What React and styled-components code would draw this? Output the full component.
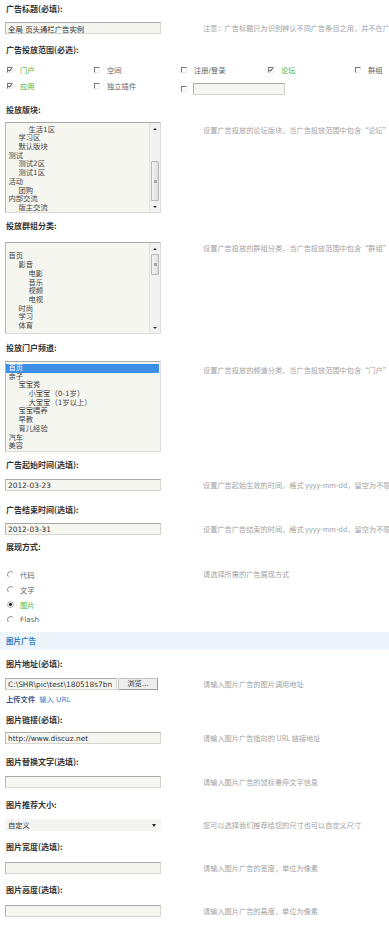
import React from "react";
import styled, { createGlobalStyle } from "styled-components";

const GlobalStyle = createGlobalStyle`
  html, body { margin: 0; padding: 0; background: #fff; }
  body {
    overflow: hidden;
    font-family: "DejaVu Sans", "Noto Sans CJK SC", sans-serif;
    color: #333;
  }
  #root { width: 389px; overflow: hidden; }
`;

const CJK = `"DejaVu Sans", "Noto Sans CJK SC", sans-serif`;

const Page = styled.div`
  width: 560px;
  padding-top: 2px;
  display: flex;
  flex-direction: column;
`;

const Label = styled.div`
  height: 14px;
  line-height: 14px;
  margin-top: ${(p) => p.$mt || 0}px;
  padding-left: 6px;
  font-size: 8px;
  font-weight: bold;
  color: #333;
  font-family: "Noto Sans CJK SC", sans-serif;
  white-space: nowrap;
`;

const Row = styled.div`
  display: grid;
  grid-template-columns: 198px 1fr;
  align-items: ${(p) => (p.$top ? "start" : "center")};
  margin-top: ${(p) => p.$mt || 0}px;
  padding-left: 5px;
`;

const Tip = styled.div`
  font-size: 7.2px;
  line-height: 9px;
  color: #a3a3a3;
  white-space: nowrap;
  font-family: "Noto Sans CJK SC", sans-serif;
  padding-top: ${(p) => p.$pt || 0}px;
`;

const TextInput = styled.input`
  box-sizing: border-box;
  width: ${(p) => p.$w || 156}px;
  height: 12px;
  margin: 0;
  padding: 0 0 0 2px;
  border: 1px solid #d6d6cf;
  border-top-color: #a9a9a9;
  border-left-color: #b5b5b5;
  background: #f6f6f1;
  font-family: ${CJK};
  font-size: 7.4px;
  line-height: 10px;
  color: #333;
  outline: none;
`;

const ScopeGrid = styled.div`
  display: grid;
  grid-template-columns: repeat(5, 87px);
  grid-auto-rows: 16px;
  align-items: center;
  padding-left: 7px;
  margin-top: 5px;
`;

const CheckItem = styled.label`
  display: flex;
  align-items: center;
  gap: ${(p) => (p.$gap != null ? p.$gap : 7)}px;
  font-family: ${CJK};
  font-size: 7.3px;
  color: ${(p) => (p.$on ? "#3cb83c" : "#666")};
  white-space: nowrap;
  margin-top: ${(p) => p.$dy || 0}px;
`;

const Box = styled.span`
  box-sizing: border-box;
  width: 6px;
  height: 6px;
  flex: none;
  display: inline-flex;
  border-top: 1px solid #777;
  border-left: 1px solid #777;
  border-right: 1px solid #ececec;
  border-bottom: 1px solid #ececec;
  background: #fff;
`;

const Check = ({ on }) => (
  <Box>
    {on && (
      <svg width="4" height="4" viewBox="0 0 4 4">
        <polyline points="0.3,1.8 1.4,3.2 3.7,0.4" fill="none" stroke="#222" strokeWidth="1" />
      </svg>
    )}
  </Box>
);

const ListBox = styled.div`
  box-sizing: border-box;
  width: 156px;
  height: ${(p) => p.$h}px;
  display: flex;
  border: 1px solid #dcdcd6;
  border-top-color: #a8a8a8;
  border-left-color: #b4b4b4;
  background: #f6f6f1;
  overflow: hidden;
`;

const Options = styled.div`
  flex: 1;
  padding-top: ${(p) => p.$pt || 0}px;
  padding-right: 1px;
  overflow: hidden;
`;

const Option = styled.div`
  height: 8.7px;
  line-height: 8.7px;
  font-family: ${CJK};
  font-size: 7.3px;
  white-space: nowrap;
  padding-left: ${(p) => 2.5 + p.$level * 10}px;
  color: ${(p) => (p.$sel ? "#fff" : "#444")};
  background: ${(p) => (p.$sel ? "#3d8ee6" : "transparent")};
`;

const Scrollbar = styled.div`
  width: 10px;
  flex: none;
  display: flex;
  flex-direction: column;
  background: #f1f1f1;
  border-left: 1px solid #e2e2e2;
`;

const ArrowBtn = styled.div`
  height: 11px;
  flex: none;
  display: flex;
  align-items: center;
  justify-content: center;
  &::before {
    content: "";
    border-left: 2px solid transparent;
    border-right: 2px solid transparent;
    ${(p) => (p.$down ? "border-top: 2px solid #333;" : "border-bottom: 2px solid #333;")}
  }
`;

const Track = styled.div`
  flex: 1;
  display: flex;
  flex-direction: column;
`;

const Thumb = styled.div`
  box-sizing: border-box;
  margin: 0 1px;
  border: 1px solid #b9b9b9;
  border-radius: 1px;
  background: linear-gradient(90deg, #f4f4f4, #dedede);
  display: flex;
  align-items: center;
  justify-content: center;
  &::after {
    content: "";
    width: 3px;
    height: 3px;
    background: #a8a8a8;
  }
`;

const RadioGroup = styled.div`
  display: flex;
  flex-direction: column;
  padding-left: 2px;
`;

const RadioItem = styled.label`
  height: 15px;
  display: flex;
  align-items: center;
  gap: 6px;
  font-family: ${CJK};
  font-size: 7.3px;
  color: ${(p) => (p.$on ? "#3cb83c" : "#666")};
`;

const Radio = ({ on }) => (
  <svg width="7" height="7" viewBox="0 0 7 7">
    {on ? (
      <>
        <circle cx="3.5" cy="3.5" r="3" fill="#e4e4e4" stroke="#999" strokeWidth="0.6" />
        <circle cx="3.5" cy="3.5" r="1.4" fill="#111" />
      </>
    ) : (
      <path d="M1.4 5.8 A3 3 0 0 1 5.8 1.4" fill="none" stroke="#777" strokeWidth="0.9" />
    )}
  </svg>
);

const SectionBar = styled.div`
  height: 18px;
  line-height: 18px;
  margin-top: 5px;
  padding-left: 6px;
  background: #eef5fa;
  color: #2b84c6;
  font-family: "Noto Sans CJK SC", sans-serif;
  font-weight: bold;
  font-size: 7.5px;
`;

const FileField = styled.div`
  display: flex;
  align-items: center;
  gap: 1px;
`;

const BrowseButton = styled.button`
  box-sizing: border-box;
  width: 40px;
  height: 12px;
  margin: 0;
  padding: 0;
  border: 1px solid #c4c4c4;
  border-bottom-color: #9c9c9c;
  border-right-color: #9c9c9c;
  background: #ededed;
  font-family: ${CJK};
  font-size: 7.3px;
  line-height: 10px;
  color: #333;
`;

const LinkRow = styled.div`
  height: 12px;
  line-height: 12px;
  margin-top: 4px;
  padding-left: 6px;
  display: flex;
  gap: 4px;
  font-family: ${CJK};
  font-size: 7.3px;
`;

const Link = styled.a`
  color: ${(p) => (p.$strong ? "#30578f" : "#3d7fc4")};
  font-weight: ${(p) => (p.$strong ? "bold" : "normal")};
  text-decoration: none;
`;

const Select = styled.div`
  box-sizing: border-box;
  width: 156px;
  height: 12px;
  display: flex;
  align-items: center;
  justify-content: space-between;
  padding: 0 5px 0 3px;
  background: #f4f4f2;
  font-family: ${CJK};
  font-size: 7.3px;
  color: #333;
  &::after {
    content: "";
    border-left: 2px solid transparent;
    border-right: 2px solid transparent;
    border-top: 3px solid #222;
  }
`;

const forumItems = [
  ["生活1区", 2], ["学习区", 1], ["默认版块", 1], ["测试", 0], ["测试2区", 1],
  ["测试1区", 1], ["活动", 0], ["团购", 1], ["内部交流", 0], ["版主交流", 1],
];
const groupItems = [
  ["", 0], ["首页", 0], ["影音", 1], ["电影", 2], ["音乐", 2], ["视频", 2],
  ["电视", 2], ["时尚", 1], ["学习", 1], ["体育", 1],
];
const portalItems = [
  ["首页", 0, true], ["亲子", 0], ["宝宝秀", 1], ["小宝宝（0-1岁）", 2], ["大宝宝（1岁以上）", 2],
  ["宝宝喂养", 1], ["早教", 1], ["育儿经验", 1], ["汽车", 0], ["美容", 0],
];

const List = ({ items, h, pt, scroll }) => (
  <ListBox $h={h} role="listbox">
    <Options $pt={pt}>
      {items.map(([t, l, sel], i) => (
        <Option key={i} $level={l} $sel={sel}>{t || "\u00a0"}</Option>
      ))}
    </Options>
    {scroll && (
      <Scrollbar>
        <ArrowBtn />
        <Track>
          <Thumb style={{ marginTop: scroll.top, height: scroll.height }} />
        </Track>
        <ArrowBtn $down />
      </Scrollbar>
    )}
  </ListBox>
);

export default function App() {
  return (
    <>
      <GlobalStyle />
      <Page>
        <Label>广告标题(必填):</Label>
        <Row $mt={6}>
          <TextInput readOnly defaultValue="全局 页头通栏广告实例" />
          <Tip>注意：广告标题只为识别辨认不同广告条目之用，并不在广告中显示</Tip>
        </Row>

        <Label $mt={9}>广告投放范围(必选):</Label>
        <ScopeGrid>
          <CheckItem $on><Check on />门户</CheckItem>
          <CheckItem><Check />空间</CheckItem>
          <CheckItem><Check />注册/登录</CheckItem>
          <CheckItem $on><Check on />论坛</CheckItem>
          <CheckItem><Check />群组</CheckItem>
          <CheckItem $on><Check on />应用</CheckItem>
          <CheckItem><Check />独立插件</CheckItem>
          <CheckItem $gap={6} $dy={5}><Check /><TextInput $w={92} readOnly defaultValue="" /></CheckItem>
        </ScopeGrid>

        <Label $mt={9}>投放版块:</Label>
        <Row $top $mt={5}>
          <List items={forumItems} h={91} pt={2.7} scroll={{ top: 27, height: 40 }} />
          <Tip $pt={4}>设置广告投放的论坛版块，当广告投放范围中包含“论坛”时有效</Tip>
        </Row>

        <Label $mt={6}>投放群组分类:</Label>
        <Row $top $mt={9}>
          <List items={groupItems} h={92} pt={0.8} scroll={{ top: 0, height: 21 }} />
          <Tip $pt={2}>设置广告投放的群组分类，当广告投放范围中包含“群组”时有效</Tip>
        </Row>

        <Label $mt={7}>投放门户频道:</Label>
        <Row $top $mt={6}>
          <List items={portalItems} h={91} pt={2} />
          <Tip $pt={4.5}>设置广告投放的频道分类，当广告投放范围中包含“门户”时有效</Tip>
        </Row>

        <Label $mt={6}>广告起始时间(选填):</Label>
        <Row $mt={7}>
          <TextInput readOnly defaultValue="2012-03-23" />
          <Tip>设置广告起始生效的时间，格式 yyyy-mm-dd，留空为不限制起始时间</Tip>
        </Row>

        <Label $mt={12}>广告结束时间(选填):</Label>
        <Row $mt={6}>
          <TextInput readOnly defaultValue="2012-03-31" />
          <Tip>设置广告广告结束的时间，格式 yyyy-mm-dd，留空为不限制结束时间</Tip>
        </Row>

        <Label $mt={5}>展现方式:</Label>
        <Row $top $mt={13}>
          <RadioGroup>
            <RadioItem><Radio />代码</RadioItem>
            <RadioItem><Radio />文字</RadioItem>
            <RadioItem $on><Radio on />图片</RadioItem>
            <RadioItem><Radio />Flash</RadioItem>
          </RadioGroup>
          <Tip $pt={3}>请选择所需的广告展现方式</Tip>
        </Row>

        <SectionBar>图片广告</SectionBar>

        <Label $mt={7}>图片地址(必填):</Label>
        <Row $mt={7}>
          <FileField>
            <TextInput $w={112} readOnly defaultValue="C:\SHR\pic\test\180518s7bn" />
            <BrowseButton type="button">浏览...</BrowseButton>
          </FileField>
          <Tip>请输入图片广告的图片调用地址</Tip>
        </Row>
        <LinkRow>
          <Link $strong>上传文件</Link>
          <Link>输入 URL</Link>
        </LinkRow>

        <Label $mt={7}>图片链接(必填):</Label>
        <Row $mt={5}>
          <TextInput readOnly defaultValue="http://www.discuz.net" />
          <Tip>请输入图片广告指向的 URL 链接地址</Tip>
        </Row>

        <Label $mt={11}>图片替换文字(选填):</Label>
        <Row $mt={7}>
          <TextInput readOnly defaultValue="" />
          <Tip>请输入图片广告的鼠标悬停文字信息</Tip>
        </Row>

        <Label $mt={10}>图片推荐大小:</Label>
        <Row $mt={7}>
          <Select>自定义</Select>
          <Tip>您可以选择我们推荐给您的尺寸也可以自定义尺寸</Tip>
        </Row>

        <Label $mt={9}>图片宽度(选填):</Label>
        <Row $mt={8}>
          <TextInput readOnly defaultValue="" />
          <Tip>请输入图片广告的宽度，单位为像素</Tip>
        </Row>

        <Label $mt={9}>图片高度(选填):</Label>
        <Row $mt={8}>
          <TextInput readOnly defaultValue="" />
          <Tip>请输入图片广告的高度，单位为像素</Tip>
        </Row>
      </Page>
    </>
  );
}
